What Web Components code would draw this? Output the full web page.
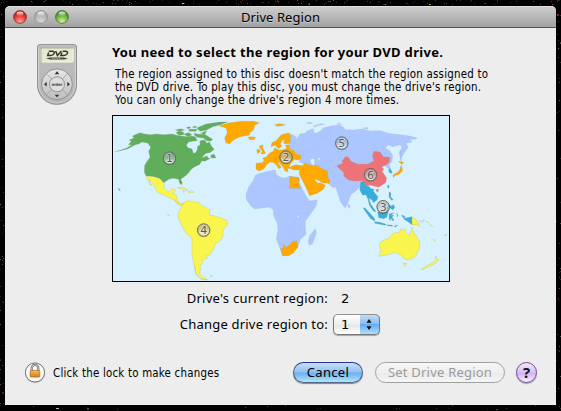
<!DOCTYPE html>
<html lang="en"><head><meta charset="utf-8"><title>Drive Region</title>
<style>
html,body{margin:0;height:100%;overflow:hidden;background:#000}
body{font-family:"Noto Sans","Open Sans",sans-serif;color:#000}
</style></head><body>
<drive-desktop></drive-desktop>
<script>
const define=(name,html,setup)=>customElements.define(name,class extends HTMLElement{
  connectedCallback(){
    if(this.shadowRoot)return;
    this.attachShadow({mode:'open'}).innerHTML=html;
    if(setup)setup.call(this,this.shadowRoot);
  }
});

/* One line of text, tracked so that it spans the given width. */
define('mac-label',`<style>:host{display:block;white-space:nowrap}span{display:inline-block}</style><span><slot></slot></span>`,function(r){
  const s=r.querySelector('span'),w=+this.getAttribute('span');
  if(!w)return;
  const n=this.textContent.length;
  s.style.letterSpacing=((w-s.getBoundingClientRect().width)/(n-1))+'px';
});

define('mac-light',`<style>:host{display:block;width:14px;height:14px}svg{display:block}</style>
<svg width="14" height="14" viewBox="0 0 14 14"><defs>
<radialGradient id="g" cx=".5" cy=".85" r=".75"><stop offset="0" class="a"/><stop offset=".55" class="b"/><stop offset="1" class="c"/></radialGradient>
<linearGradient id="h" x2="0" y2="1"><stop stop-color="#fff" stop-opacity=".9"/><stop offset="1" stop-color="#fff" stop-opacity=".1"/></linearGradient></defs>
<circle cx="7" cy="7.6" r="6.3" fill="#fff" opacity=".45"/><circle cx="7" cy="7" r="6.4" fill="url(#g)" class="o" stroke-width=".9"/><ellipse cx="7" cy="3.7" rx="3.4" ry="2.2" fill="url(#h)"/></svg>`,function(r){
  const c={red:['#ffb0a5','#f2403c','#b51c1c','#8c2b2b'],grey:['#d6d6d6','#bcbcbc','#a6a6a6','#8b8b8b'],green:['#d5f39a','#77bc45','#3a8420','#4c7338']}[this.getAttribute('tone')];
  ['a','b','c'].forEach((k,i)=>r.querySelector('.'+k).style.stopColor=c[i]);
  r.querySelector('.o').style.stroke=c[3];
});

define('title-bar',`<style>
:host{display:grid;grid-template-columns:1fr auto 1fr;align-items:center;box-sizing:border-box;height:22px;padding:0 8px;background:linear-gradient(#cdcdcd,#a2a2a2);border-top:1px solid #dedede;border-bottom:1px solid #515151;border-radius:5px 5px 0 0}
.l{display:flex;gap:7px}.t{font-size:13px;line-height:18px;text-shadow:0 1px rgba(255,255,255,.35)}</style>
<div class="l"><mac-light tone="red"></mac-light><mac-light tone="grey"></mac-light><mac-light tone="green"></mac-light></div>
<div class="t"><slot></slot></div><div></div>`);

define('dvd-icon',`<style>:host{display:block;width:42px;height:63px}svg{display:block}</style>
<svg width="42" height="63" viewBox="36 43 42 63"><defs>
<linearGradient id="m" x2="0" y2="1"><stop stop-color="#ababab"/><stop offset=".1" stop-color="#bdbdbd"/><stop offset="1" stop-color="#b5b5b5"/></linearGradient>
<linearGradient id="r" x2="0" y2="1"><stop stop-color="#e6e6e6"/><stop offset="1" stop-color="#bdbdbd"/></linearGradient></defs>
<path d="M37 85V47.500a3 3 0 0 1 3-3h34a3 3 0 0 1 3 3V85a20 20 0 0 1-40 0z" fill="#8e8e8e" opacity=".6"/>
<path d="M37.500 84V47.500a3 3 0 0 1 3-3h33a3 3 0 0 1 3 3V84a19.500 20 0 0 1-39 0z" fill="url(#m)" stroke="#878787" stroke-width=".8"/>
<path d="M38.700 84V48a2.200 2.200 0 0 1 2.200-2.200h32.200a2.200 2.200 0 0 1 2.200 2.200V84a18.300 19 0 0 1-36.600 0z" fill="none" stroke="#d6d6d6" stroke-width=".8"/>
<rect x="40.800" y="48" width="32.400" height="14" rx="1" fill="#e6ead0" stroke="#f7f7ec"/><path d="M41 62V48H73" fill="none" stroke="#858776" stroke-width=".7"/>
<g fill="none" stroke="#34362f" stroke-width="1.450"><path d="M48.800 51.200h3.400q3 .3 2 2.300t-4 2h-2.500l1-3M55.700 51l1.700 4.500 4-4.500M62.700 51.200h2.700q3 .3 2 2.300t-4 2h-2.500l1-3"/></g>
<path d="M46 58.500l4-1.100h14l4 1.100-4 1.100H50z" fill="#44463d"/><path d="M52 58.500h9" stroke="#b9bca6" stroke-width=".7" stroke-dasharray="1.500 .7"/>
<circle cx="57" cy="84.300" r="15.400" fill="url(#r)" stroke="#8d8d8d" stroke-width=".9"/>
<path d="M46.500 73.800l21 21M67.500 73.800l-21 21" stroke="#999" stroke-width=".8"/>
<circle cx="57" cy="84.300" r="7.500" fill="#dedede" stroke="#8c8c8c" stroke-width=".9"/>
<path d="M54.700 74.200l2.300-3 2.300 3zM54.700 94.800l2.300 2.500 2.300-2.500zM46.700 82l-2.700 2.300 2.700 2.300zM67.300 82l2.700 2.300-2.700 2.300z" fill="#333"/>
<text x="57" y="85.700" font-size="4.300" font-weight="bold" font-family="DejaVu Sans" fill="#555" text-anchor="middle" textLength="11">enter</text></svg>`);

define('region-map',`<style>:host{display:block;box-sizing:border-box;width:338px;height:167px;border:1px solid #000;background:#d7f1ff}svg{display:block}
path{stroke:#8f9c80;stroke-opacity:.45;stroke-width:1.500;stroke-linejoin:round}
.g{fill:#60ae5c}.o{fill:#ffa900}.b{fill:#acc6ff;stroke:#9fa9c4}.y{fill:#faf54c}.r{fill:#ee7378}.c{fill:#35aedd}.w{fill:#d7f1ff}</style>
<svg width="336" height="165" viewBox="113 116 336 165"><defs>
<linearGradient id="k" x2="0" y2="1"><stop stop-color="#fff" stop-opacity=".15"/><stop offset=".5" stop-color="#fff" stop-opacity=".35"/><stop offset="1" stop-color="#fff" stop-opacity=".85"/></linearGradient></defs>
<g transform="translate(110 112) scale(.33333)">
<path class="g" d="M55 98L64 88 57 84 72 78 67 72 90 62 104 66 122 68 140 66 160 68 186 66 200 70 215 72 232 74 244 72 256 74 262 86 248 88 236 90 229 100 234 107 246 111 250 124 257 122 262 112 262 104 270 98 271 86 284 84 290 94 298 90 304 102 313 112 300 122 288 124 274 137 292 132 293 137 301 139 285 148 276 146 268 158 254 164 244 172 236 182 226 192 212 202 217 212 214 219 208 212 206 202 190 199 176 202 160 213 150 200 132 194 108 192 103 180 104 160 110 150 120 136 116 118 122 106 114 94 96 90 86 96 76 98 52 111 14 120 50 108 66 98z"/>
<path class="g" d="M198 62L208 56 220 60 222 68 207 70zM222 66L236 62 246 68 234 74zM196 54L212 50 224 54 208 58zM252 64L262 66 286 68 308 82 302 88 290 86 280 78 262 76 254 70zM236 52L262 52 258 58 238 58zM260 48L288 36 328 30 352 30 332 38 308 44 290 54 270 58zM272 64L290 56 284 68zM302 130L312 126 318 138 304 138zM268 90l8-4 0 6zM230 46l10-2 2 4-10 2zM248 44l10-2 2 4-10 2zM24 228l5 3 2 6-4-3z"/>
<path class="y" d="M108 192L132 194 150 200 162 214 163 229 176 239 186 230 196 232 190 245 200 250 202 268 214 275 226 273 222 279 208 280 192 264 168 253 142 241 136 228 124 208 119 202 120 212 126 222 121 219 113 202zM202 227l16-2 16 10-14-2-10-3zM234 238l12-2 6 5-16 2zM218 238l6 0-2 3z"/>
</g>
<g transform="translate(200 112) scale(.33333)">
<path class="b" d="M268 66L278 68 288 74 286 80 292 78 300 66 316 64 322 56 342 50 340 60 348 64 362 56 370 48 396 41 418 40 430 46 436 53 460 54 486 51 510 57 540 56 570 65 600 68 628 72 652 78 646 82 630 82 636 90 618 94 624 106 612 124 602 140 598 122 606 106 600 98 578 104 564 98 556 108 570 116 578 130 576 148 568 158 572 170 562 168 554 158 520 190 492 215 481 222 468 236 452 249 446 266 440 282 434 287 422 270 414 245 408 226 398 226 384 213 370 170 320 158 298 150 302 132 284 120 270 108 268 90z"/>
<path class="b" d="M340 42l22-7 12 2-18 3-12 5zM410 36l10-2 4 4zM490 47l14 0 0 3-12 0zM444 277l5 1 1 8-4 3zM320 33l12-2 6 3-14 1zM600 114l4 16 0 20-4-12z"/>
<path class="o" d="M58 42L74 36 90 32 126 28 160 28 178 32 164 40 160 54 150 62 148 69 118 75 100 84 88 96 78 92 74 78 82 62 78 48zM144 76l8-2 14 2-2 6-14 2zM224 38l14-3 18 3-10 3-14 2zM177 102l12-3-1 9 8 14-3 4-11-1 5-6zM170 114l8-3 3 8-8 6z"/>
<path class="o" d="M168 172V154L188 152 192 144 188 138 198 136 208 124 220 118 224 107 231 112 240 115 256 112 260 106 256 100 268 98 270 110 284 118 286 124 303 131 302 140 292 144 284 142 274 152 268 162 270 170 263 168 264 180 254 176 250 166 236 150 234 154 244 166 236 170 230 160 222 152 210 150 200 158 192 170 178 177z"/>
<path class="o" d="M213 104L216 92 230 85 244 68 266 62 272 72 270 94 254 96 250 90 258 80 246 86 241 96 246 102 236 110 226 100z"/>
<path class="o" d="M268 168l6-5 14-5 20 3 6-8 22 9 14-3 14 10 18 8 2 18 6 14-2 5-18-1-12-7-8-3-4-5 0 8 8 8 8-2 14 8-6 12-18 12-23 7-10-22-14-28-7-15 1-12-19 0zM269 194l28 2 1 10-4-3 8 26H269zM595 148l16 3-5 6zM604 158l4 18-12 12-10 2-6 7-1-8 16-10 5-7z"/>
<path class="w" d="M330 144l8-5 8 4-3 4 2 12-7 1-6-8zM352 140l5-4 4 5-5 5z"/>
<path class="r" d="M410 162L428 154 426 146 438 133 448 138 452 148 474 157 504 156 522 146 517 131 522 118 540 120 550 134 570 136 568 150 558 160 544 164 552 172 546 178 560 198 557 212 536 226 512 220 496 221 489 206 464 207 446 204 431 192 432 182zM529 232h7l-2 8-5-2z"/>
<path class="c" d="M482 211L490 208 498 220 508 224 513 230 522 231 520 238 534 254 531 264 520 272 516 264 506 258 512 276 522 290 528 300 520 297 508 280 504 262 498 248 488 250 479 233zM567 169l6 4 4 10-7 1-4-8zM564 218l4 4-3 8-3-6zM567 240l6 3-1 12 8 8-5 2-8-10zM566 278l6 4 10-4 2 10-6 6-12-10z"/>
</g>
<g transform="translate(110 195) scale(.33333)"><path class="y" d="M204 66L207 48 217 32 222 22 236 16 244 20 266 22 276 32 290 38 300 46 298 60 320 64 350 76 352 90 340 104 338 126 330 138 316 146 312 160 300 180 288 180 292 190 276 196 278 206 270 214 272 222 268 236 292 254 274 252 258 236 252 210 246 180 246 130 226 112 212 84zM192 14l14 10 14 2-4 6-14-6zM172 58l6 2-2 3zM300 242l8 0-5 4z"/><path d="M254 212l4 28 16 13 18 2" fill="none"/></g>
<g transform="translate(230 195) scale(.33333)">
<path class="b" d="M48 0L56-24 70-44 76-59 92-65 115-71 136-75 138-63 148-55 162-50 180-57 206-50 208-36 224-4 238 18 262 15 258 34 238 62 226 78 226 96 228 118 212 132 202 158 176 180 158 182 150 160 139 132 144 104 142 84 132 64 129 43 118 36 100 38 74 42 62 32 50 15zM256 102l3 12-12 34-10 2-2-12 4-16z"/>
<path class="w" d="M202 60l6 0-2 8-5-1zM194 76l3 8-2 2zM207 98l4 5-1 6z"/>
<path class="o" d="M152 160L158 161 162 148 167 158 180 148 190 138 200 138 204 156 190 174 176 182 158 182z"/><path class="o" d="M180-55l27 3 1 9-4-3 7 26h-32z"/></g>
<g transform="translate(340 195) scale(.33333)">
<path class="c" d="M69 38l7 2 22 24 7 9-1 5-12-7-14-19zM103 80l14 1 22 7-4 3-30-6zM113 51l10 0 20-16 3 9-5 22-10 5-15-3zM148 56l15-3-11 8 10 0-6 5 6 10-4 1-6-8-1 9-4-8zM142 89l16 2-1 3-15-2zM162 93l12-3-9 7zM170 54l4 6-2 6zM184 60l10 3 0 7 22-5v24l-12-9-10-6z"/>
<path class="y" d="M216 66l14 9 10 19-12-5-12 0zM238 78l10-1 4-4 0 7-10 2zM258 78l8 5-2 1zM270 88l8 7-2 1zM280 132l6 5-2 1zM312 122l8-5-2 6z"/>
<path class="y" d="M117 184L123 168 118 152 122 140 146 130 154 120 164 112 178 114 182 102 198 102 196 112 208 122 212 112 216 96 222 114 230 124 240 144 238 162 226 184 214 192 196 194 185 182 178 178 164 172 154 176 140 180zM190 204l10 1-5 10zM287 183l3 8 7 3-10 10-10 7-18 7-10 7-6-2 16-10 22-12 7-8z"/></g>
<g id="n"></g></svg>`,function(r){
  r.querySelector('#n').innerHTML=[[169.5,158],[286,157],[383.2,206.7],[203.7,230],[341.8,143],[370.5,174.5]].map(([x,y],i)=>
   `<circle cx="${x}" cy="${y+.7}" r="6.600" fill="#444" opacity=".35"/><circle cx="${x}" cy="${y}" r="6.200" fill="url(#k)" stroke="#686a68" stroke-width="1"/><text x="${x}" y="${y+4}" text-anchor="middle" font-family="DejaVu Sans" font-size="11" fill="#585a5a" stroke="#fff" stroke-width="1.400" stroke-opacity=".55" paint-order="stroke">${i+1}</text>`).join('');
});

define('mac-popup',`<style>
:host{display:flex;box-sizing:border-box;width:47px;height:21px;border:1px solid #777;border-top-color:#929292;border-radius:5px;overflow:hidden;background:linear-gradient(#fff,#ececec 50%,#e4e4e4 51%,#fff);box-shadow:0 1px 1px rgba(0,0,0,.3)}
.v{flex:1;font:13px/20px "DejaVu Sans",sans-serif;padding-left:7px}
.a{width:20px;margin:-1px -1px -1px 0;background:linear-gradient(#c3dcf4,#86bcf0 48%,#65aaf0 50%,#aee1ff);border-top:1px solid #20309a;border-right:1px solid #3b5595;border-bottom:1px solid #4b5f85;box-sizing:border-box;border-radius:0 5px 5px 0}svg{display:block}</style>
<div class="v"><slot></slot></div><div class="a"><svg width="19" height="19"><path d="M9 4l2.500 3.800h-5zM9 15l2.500-3.800h-5z" fill="#111"/></svg></div>`);

define('mac-button',`<style>
:host{display:flex;align-items:center;justify-content:center;box-sizing:border-box;height:21px;border-radius:11px;border:1px solid #a0a0a0;font-size:13px;line-height:19px;color:#9a9a9a;background:linear-gradient(#f6f6f6,#efefef 50%,#e9e9e9 51%,#f6f6f6)}
:host([primary]){color:#000;border-color:#27329d #405a8e #56667f;background:linear-gradient(#c9dff5,#91c1f0 48%,#6baef0 52%,#b0e6ff);box-shadow:0 1px 1px rgba(0,0,0,.45)}
:host([help]){width:21px;font:bold 15px/19px "Noto Sans",sans-serif;color:#111;border-color:#6a4d8e;background:linear-gradient(#f3e9fd,#d9c2f8 48%,#cdb0f4 52%,#fbeeff);box-shadow:0 1px 1px rgba(0,0,0,.35)}</style><slot></slot>`);

define('lock-button',`<style>:host{display:block;width:22px;height:23px}svg{display:block}</style><svg width="22" height="23" viewBox="0 0 22 23"><defs><linearGradient id="l" x2="0" y2="1"><stop stop-color="#ffc875"/><stop offset=".5" stop-color="#f3a03a"/><stop offset="1" stop-color="#d88316"/></linearGradient></defs>
<circle cx="11" cy="12.200" r="9.900" fill="#aaa" opacity=".6"/><circle cx="11" cy="11.500" r="9.600" fill="#fafafa" stroke="#727272" stroke-width="1"/>
<path d="M7.700 10V7.200a3.300 3.300 0 0 1 6.600 0V10" fill="none" stroke="#6c6c6c" stroke-width="2.200"/><path d="M7.700 10V7.200a3.300 3.300 0 0 1 6.600 0V10" fill="none" stroke="#ddd" stroke-width=".8"/><rect x="6.200" y="9.500" width="9.600" height="6.500" rx=".6" fill="url(#l)" stroke="#a7701f" stroke-width=".8"/><path d="M7 11.700h8M7 13.700h8" stroke="#c98a35" stroke-width=".5"/></svg>`);

define('drive-window',`<style>
:host{display:flex;flex-direction:column;height:399px;background:#ededed;border-radius:5px 5px 0 0}
.top{display:grid;grid-template-columns:42px 1fr;column-gap:34px;padding:15px 20px 0 31px}
h1{margin:0 0 7px;font-size:13px;line-height:18px;font-weight:bold}
.p,.lock{font-family:"DejaVu Sans Condensed","DejaVu Sans",sans-serif;font-stretch:semi-condensed;font-size:11.400px}
.p{padding-left:3px;line-height:13px}
region-map{margin-top:8px}
.rows{display:grid;grid-template-columns:323px 1fr;column-gap:5px;padding-top:7px;font-size:13px}
.rows mac-label{justify-self:end;line-height:20px}
.rows .cur{line-height:18px}
.two{font:13px/20px "DejaVu Sans",sans-serif;padding-left:8px}
.pick{padding-top:5px}
.foot{display:flex;align-items:center;padding:26px 19px 0 19px}
.foot .lock{line-height:21px;margin-left:7px;padding-top:2px}
.act{display:flex;gap:12px;margin-left:auto}
.c{width:70px}.s{width:130px}.act mac-button[help]{margin-left:-1px}</style>
<title-bar><mac-label span="79">Drive Region</mac-label></title-bar>
<div class="top"><dvd-icon></dvd-icon><div>
<h1><mac-label span="331">You need to select the region for your DVD drive.</mac-label></h1>
<div class="p"><mac-label span="373">The region assigned to this disc doesn't match the region assigned to</mac-label><mac-label span="366">the DVD drive. To play this disc, you must change the drive's region.</mac-label><mac-label span="284">You can only change the drive's region 4 more times.</mac-label></div>
<region-map></region-map></div></div>
<div class="rows"><mac-label class="cur" span="141">Drive's current region:</mac-label><div class="two">2</div>
<mac-label class="pick" span="148">Change drive region to:</mac-label><div class="pick"><mac-popup>1</mac-popup></div></div>
<div class="foot"><lock-button></lock-button><mac-label class="lock" span="166">Click the lock to make changes</mac-label>
<div class="act"><mac-button primary class="c"><mac-label span="42">Cancel</mac-label></mac-button><mac-button class="s"><mac-label span="104">Set Drive Region</mac-label></mac-button><mac-button help>?</mac-button></div></div>`);

define('drive-desktop',`<style>:host{display:grid;grid-template:6px 399px 6px/5px 551px 5px;width:561px;height:411px;background:#000}svg{grid-area:1/1/-1/-1}drive-window{grid-area:2/2}</style><svg width="561" height="411"></svg><drive-window></drive-window>`,function(r){
  let s=7,o='';const rnd=()=>(s=s*16807%2147483647)/2147483647;
  const col=['#777','#555','#444','#844','#465','#654'];
  for(let i=0;i<260;i++){const t=rnd(),u=rnd();let x,y;
    if(t<.6){x=u*561;y=rnd()*5}else if(t<.75){x=rnd()*4;y=u*411}else if(t<.92){x=556+rnd()*5;y=u*411}else{x=u*561;y=405+rnd()*5}
    o+=`<rect x="${x|0}" y="${y|0}" width="1" height="1" fill="${col[rnd()*6|0]}" opacity="${(.3+rnd()*.6).toFixed(2)}"/>`}
  o+='<rect x="429" y="4" width="2" height="1" fill="#bb9328"/><rect x="182" y="3" width="2" height="1" fill="#bbb"/><rect x="557" y="14" width="2" height="2" fill="#7a2718"/><rect x="56" y="408" width="3" height="1" fill="#bbb"/><rect x="87" y="408" width="2" height="2" fill="#7a3518"/><rect x="2" y="392" width="2" height="2" fill="#5a1712"/>';
  r.querySelector('svg').innerHTML=o;
});
</script></body></html>
